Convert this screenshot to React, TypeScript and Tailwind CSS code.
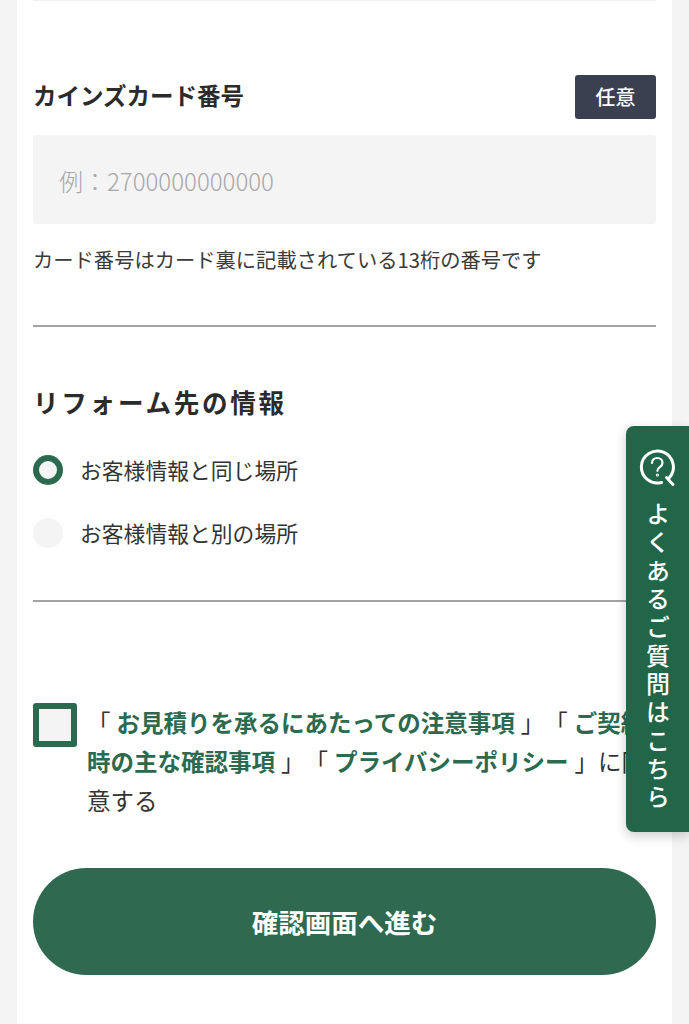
import React from 'react';

const FONT = "font-['Noto_Sans_CJK_JP','Noto_Sans',sans-serif]";

function FaqTab() {
  return (
    <a className="absolute left-[626px] top-[426px] flex h-[406px] w-[63px] flex-col items-center rounded-l-lg bg-[#22664a] pt-[23px] text-white shadow-[0_4px_12px_rgba(0,0,0,0.2)]">
      <svg width="38" height="38" viewBox="0 0 38 38" fill="none" stroke="currentColor" strokeWidth="3" strokeLinecap="round">
        <path d="M22.5 33.5A16 16 0 1 1 30.5 28.5" />
        <path d="M27.5 28.5L34 35.5" />
        <path d="M13 14c0-3 2.3-5 5.3-5s5.2 2 5.2 4.7c0 2.2-1.2 3.3-2.7 4.4-1.5 1-2.4 1.9-2.4 3.7" strokeWidth="2.2" />
        <circle cx="18.4" cy="26" r="0.5" strokeWidth="2.2" />
      </svg>
      <span className="mt-[15px] whitespace-nowrap text-[24px] font-medium leading-[30px] tracking-[4.3px] [writing-mode:vertical-rl]">
        よくあるご質問はこちら
      </span>
    </a>
  );
}

function Radio({ label, checked }: { label: string; checked?: boolean }) {
  return (
    <label className="flex h-[30px] items-center gap-[17px]">
      <span className={`h-[30px] w-[30px] rounded-full bg-[#f4f4f4] ${checked ? 'border-[6px] border-[#2c6a4f]' : ''}`} />
      <span className="text-[21.8px] leading-[30px] text-[#333]">{label}</span>
    </label>
  );
}

export default function App() {
  return (
    <div className={`relative h-[1024px] overflow-hidden bg-[#f4f4f4] px-[17px] ${FONT}`}>
      <div className="h-full bg-white px-4">
        <div className="h-[1px] bg-[#f0f0f0]" />

        {/* Card number */}
        <div className="mt-[74px] flex items-center justify-between">
          <h3 className="pb-[4px] text-[23.5px] font-bold leading-[40px] text-[#2b2b2b]">カインズカード番号</h3>
          <span className="flex h-[44px] w-[81px] items-center justify-center rounded-[3px] bg-[#3a4050] text-[20px] font-medium text-white">任意</span>
        </div>
        <div className="mt-4 flex h-[89px] items-center rounded-[3px] bg-[#f4f4f4] px-[26px] pt-[2px] text-[24px] font-light text-[#a8a8a8]">
          例：2700000000000
        </div>
        <p className="mt-[19px] text-[20.3px] leading-[32px] text-[#3a3a3a]">カード番号はカード裏に記載されている13桁の番号です</p>
        <div className="mt-[50px] h-[2px] bg-[#a3a3a3]" />

        {/* Reform destination */}
        <h2 className="mt-[55px] text-[25.6px] font-bold leading-[40px] tracking-[2.7px] text-[#2b2b2b]">リフォーム先の情報</h2>
        <div className="mt-[33px] flex flex-col gap-[33px]">
          <Radio label="お客様情報と同じ場所" checked />
          <Radio label="お客様情報と別の場所" />
        </div>
        <div className="mt-[52px] h-[2px] bg-[#a3a3a3]" />

        {/* Consent */}
        <div className="mt-[101px] flex gap-[10px]">
          <span className="h-[44px] w-[44px] shrink-0 rounded-[3px] border-[6px] border-[#2c6a4f] bg-[#f4f4f4]" />
          <p className="text-[23.5px] leading-[39px] text-[#333] [text-spacing-trim:space-all]">
            「<b className="mx-[6px] font-bold text-[#2c6a4f]">お見積りを承るにあたっての注意事項</b>」「<b className="mx-[6px] font-bold text-[#2c6a4f]">ご契約時の主な確認事項</b>」「<b className="mx-[6px] font-bold text-[#2c6a4f]">プライバシーポリシー</b>」に同意する
          </p>
        </div>

        <button className="mt-[48px] flex h-[107px] w-full items-center justify-center rounded-full bg-[#2f6a50] text-[26.5px] font-bold text-white">
          確認画面へ進む
        </button>
      </div>
      <FaqTab />
    </div>
  );
}
